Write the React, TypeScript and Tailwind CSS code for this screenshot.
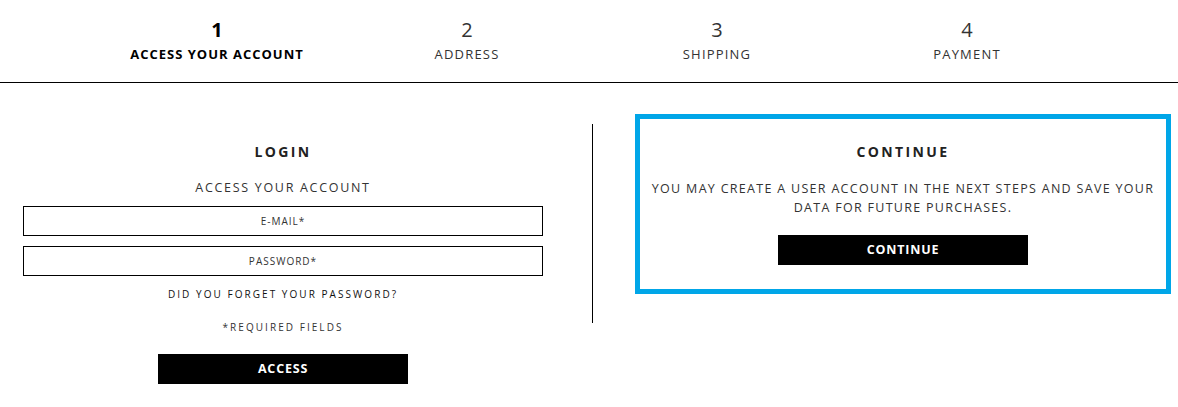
import React from "react";

const steps = [
  { n: "1", label: "ACCESS YOUR ACCOUNT", active: true },
  { n: "2", label: "ADDRESS", active: false },
  { n: "3", label: "SHIPPING", active: false },
  { n: "4", label: "PAYMENT", active: false },
];

export default function App() {
  return (
    <div className="w-[1178px] h-[407px] bg-white overflow-hidden font-['Open_Sans',sans-serif] text-[#333]">
      {/* steps */}
      <div className="h-[82px] flex pl-[92px] pt-[16px]">
        {steps.map((s) => (
          <div key={s.n} className="w-[250px] flex flex-col items-center">
            <span
              className={
                s.active
                  ? "text-[20px] leading-[28px] font-bold text-black"
                  : "text-[20px] leading-[28px] text-[#333]"
              }
            >
              {s.n}
            </span>
            <span
              className={
                s.active
                  ? "mt-[1px] text-[13px] leading-[18px] font-bold tracking-[1px] text-black"
                  : "mt-[1px] text-[13px] leading-[18px] tracking-[1.2px] text-[#333]"
              }
            >
              {s.label}
            </span>
          </div>
        ))}
      </div>
      <div className="h-px bg-black" />

      <div className="flex items-start pt-[31px]">
        {/* login */}
        <div className="w-[566px] px-[23px] pt-[28px] flex flex-col items-center">
          <h2 className="text-[14px] leading-[20px] font-bold tracking-[2.4px] text-[#222]">LOGIN</h2>
          <p className="mt-[17px] text-[12.5px] leading-[18px] tracking-[1.7px]">ACCESS YOUR ACCOUNT</p>
          <input
            className="mt-[9px] w-full h-[30px] border border-black text-center text-[10px] tracking-[1px] placeholder:text-[#333] outline-none"
            placeholder="E-MAIL*"
          />
          <input
            className="mt-[10px] w-full h-[30px] border border-black text-center text-[10px] tracking-[1px] placeholder:text-[#333] outline-none"
            placeholder="PASSWORD*"
          />
          <a className="mt-[10px] text-[10px] leading-[16px] tracking-[2.05px] text-[#111]">DID YOU FORGET YOUR PASSWORD?</a>
          <p className="mt-[17px] text-[10px] leading-[16px] tracking-[2.05px]">*REQUIRED FIELDS</p>
          <button className="mt-[19px] w-[250px] h-[30px] bg-black text-white text-[12.5px] font-bold tracking-[0.8px]">
            ACCESS
          </button>
        </div>

        {/* divider */}
        <div className="ml-[26px] mt-[10px] w-px h-[199px] bg-black" />

        {/* continue */}
        <div className="ml-[42px] w-[536px] h-[180px] border-[5px] border-[#00a6e8] flex flex-col items-center pt-[23px]">
          <h2 className="text-[14px] leading-[20px] font-bold tracking-[2.4px] text-[#222]">CONTINUE</h2>
          <p className="mt-[17px] text-[12.5px] leading-[19px] tracking-[1.3px] text-center">
            YOU MAY CREATE A USER ACCOUNT IN THE NEXT STEPS AND SAVE YOUR
            <br />
            DATA FOR FUTURE PURCHASES.
          </p>
          <button className="mt-[18px] w-[250px] h-[30px] bg-black text-white text-[12.5px] font-bold tracking-[0.8px]">
            CONTINUE
          </button>
        </div>
      </div>
    </div>
  );
}
